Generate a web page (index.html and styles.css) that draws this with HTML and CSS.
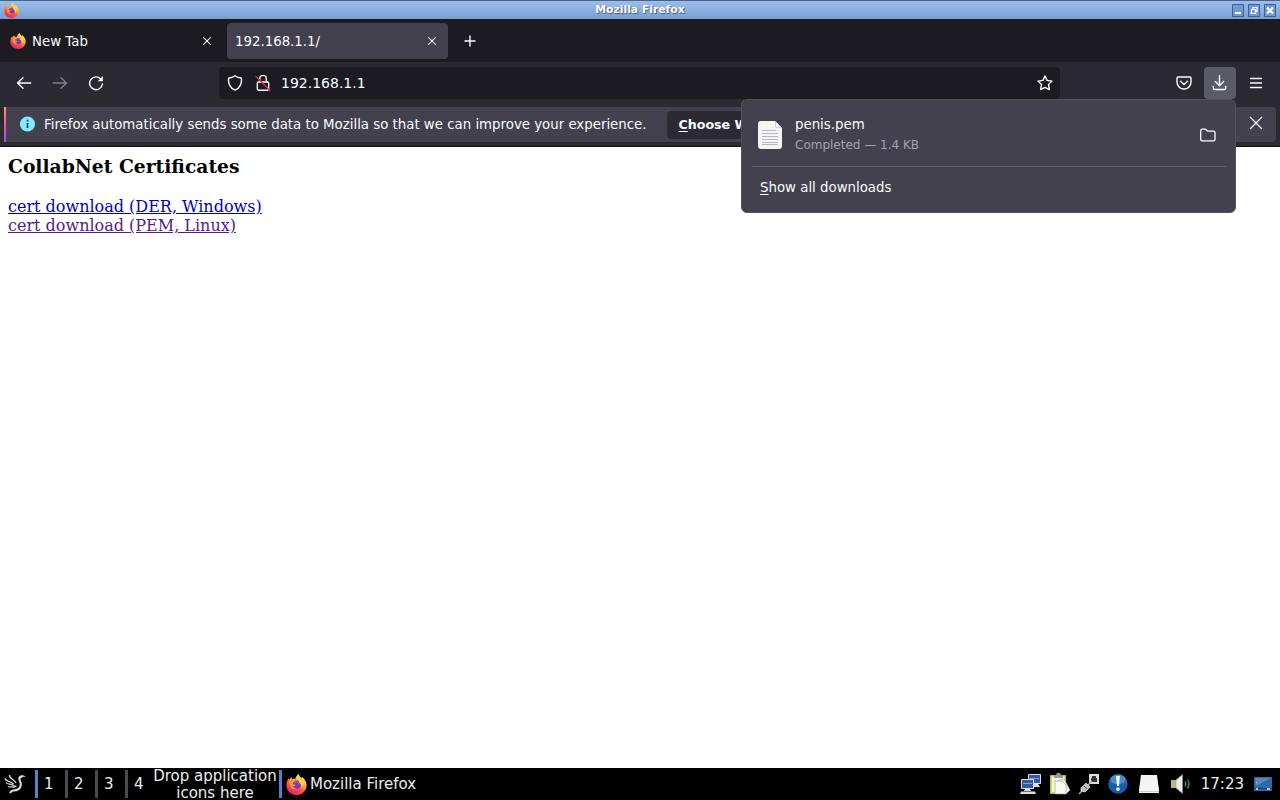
FILE: index.html
```html
<!DOCTYPE html>
<html lang="en">
<head>
  <meta charset="UTF-8" />
  <title>Mozilla Firefox</title>
  <link rel="stylesheet" href="styles.css">
</head>
<body>
  <!-- Shared icons -->
  <svg class="defs" width="0" height="0">
    <defs>
      <linearGradient id="flame" x1="0.8" y1="0" x2="0.25" y2="1">
        <stop offset="0.05" stop-color="#fff36b" />
        <stop offset="0.35" stop-color="#ffb52e" />
        <stop offset="0.62" stop-color="#ff5634" />
        <stop offset="1" stop-color="#e31587" />
      </linearGradient>
      <linearGradient id="globe" x1="0.3" y1="0" x2="0.6" y2="1">
        <stop offset="0" stop-color="#b23cc6" />
        <stop offset="1" stop-color="#5b3bc4" />
      </linearGradient>
    </defs>
    <symbol id="firefox" viewBox="0 0 16 16">
      <path fill="url(#flame)" d="M9.8 0c.2 1.6 1.2 2.3 2.2 3.3-.1-.5-.1-.8 0-1.2 1.9 1.3 3.7 3.7 3.7 6.4C15.7 12.8 12.3 16 8 16S.3 12.8.3 8.5c0-2 .7-3.9 1.9-5.2 0 .4.1.8.3 1.1.4-.9 1-1.6 1.7-2.1 0 .6.2 1.1.5 1.5.8-.2 1.6-.1 2.3.2C7.2 2.2 8.3.8 9.8 0z" />
      <circle cx="8.3" cy="8" r="3.2" fill="url(#globe)" />
      <path fill="#ff9b32" d="M2.5 4.700c1.500-.8 3.200-.7 4.500.1 0 .7-.6 1.200-1.500 1.400-.5.6-.7 1-.3 1.700.8-.2 1.600 0 2.200.6-.9.1-1.400.8-2.300.8.6 1.300 2 1.900 3.300 1.500-1.600 1.200-4.300.7-5.300-1.500-.6-1.500-.8-3-.6-4.600z" />
      <path fill="#ffd43d" d="M10.400 3.200c2.900 2 3.200 5.400 1.500 7.500.1-1.600-.5-3.200-1.700-4.100-1-.8-.9-2 .2-3.400z" />
    </symbol>
  </svg>

  <header class="titlebar">
    <svg class="title-icon" width="15" height="15"><use href="#firefox" /></svg>
    <span class="title">Mozilla Firefox</span>
    <div class="window-buttons">
      <svg width="12" height="13" viewBox="0 0 12 13"><path d="M.5.5h11v12H.5z" fill="#6f99d3" stroke="#3c5f94" /><path d="M3 9h6" stroke="#fff" stroke-width="2" /></svg>
      <svg width="12" height="13" viewBox="0 0 12 13"><path d="M.5.5h11v12H.5z" fill="#6f99d3" stroke="#3c5f94" /><path d="M5 6V3.500h4v4H7M3.500 5.500h4v4h-4z" fill="none" stroke="#fff" stroke-width="1.200" /></svg>
      <svg width="12" height="13" viewBox="0 0 12 13"><path d="M.5.5h11v12H.5z" fill="#6f99d3" stroke="#3c5f94" /><path d="M3 3.500l6 6m0-6l-6 6" stroke="#fff" stroke-width="2.200" /></svg>
    </div>
  </header>

  <nav class="tabs">
    <div class="tab">
      <svg width="16" height="16"><use href="#firefox" /></svg>
      <span class="tab-label">New Tab</span>
      <svg class="tab-close" width="8" height="8" viewBox="0 0 8 8"><path d="M.3.3l7.400 7.400m0-7.400L.3 7.700" /></svg>
    </div>
    <div class="tab active">
      <span class="tab-label">192.168.1.1/</span>
      <svg class="tab-close" width="8" height="8" viewBox="0 0 8 8"><path d="M.3.3l7.400 7.400m0-7.400L.3 7.700" /></svg>
    </div>
    <svg class="new-tab" width="12" height="12" viewBox="0 0 12 12"><path d="M6 .5v11M.5 6h11" /></svg>
  </nav>

  <div class="toolbar">
    <div class="nav-buttons">
      <svg width="16" height="16" viewBox="0 0 16 16"><path d="M14.700 8H1.700M7 2.700L1.500 8 7 13.300" /></svg>
      <svg class="disabled" width="16" height="16" viewBox="0 0 16 16"><path d="M1.300 8h13M9 2.700L14.500 8 9 13.300" /></svg>
      <svg width="16" height="16" viewBox="0 0 16 16"><path d="M12.800 4A6.400 6.400 0 1 0 14.400 9" /><path class="solid" d="M14.900 1v5.200H9.700z" /></svg>
    </div>
    <div class="urlbar">
      <svg width="16" height="16" viewBox="0 0 16 16"><path d="M8 .8c2 1.500 4.300 2.100 6.300 2.200.9 5.200-1.500 10.400-6.300 12.200C3.200 13.400.8 8.200 1.700 3 3.700 2.900 6 2.300 8 .8z" /></svg>
      <svg class="lock" width="16" height="16" viewBox="0 0 16 16"><path d="M4.700 7V3.700a3.300 3.300 0 0 1 6.600 0V7M3.500 7h9q1.200 0 1.200 1.200v5.600q0 1.400-1.200 1.400h-9q-1.200 0-1.200-1.400V8.200Q2.300 7 3.500 7z" /><path class="strike" d="M1 1.500L15 15.500" /></svg>
      <span class="url">192.168.1.1</span>
      <svg class="star" width="16" height="16" viewBox="0 0 16 16"><path d="M8 .9l2.100 4.500 4.900.7-3.500 3.500.8 5L8 12.300l-4.300 2.300.8-5L1 6.100l4.900-.7z" /></svg>
    </div>
    <div class="tools">
      <svg width="16" height="16" viewBox="0 0 16 16"><path d="M2.300 2h11.400q1.300 0 1.300 1.300V7A7 7 0 0 1 1 7V3.300Q1 2 2.300 2zM4.500 6.300L8 9.600l3.500-3.300" /></svg>
      <div class="tool-active">
        <svg width="16" height="16" viewBox="0 0 16 16"><path d="M7.500.5v10M3.400 6.600l4.100 4.100 4.100-4.100M1.300 11.500V13q0 1.500 1.500 1.500h9.400q1.500 0 1.500-1.500v-1.500" /></svg>
      </div>
      <svg width="16" height="16" viewBox="0 0 16 16"><path d="M2.500 3.500h11M2.500 8h11M2.500 12.500h11" /></svg>
    </div>
  </div>

  <div class="notice-wrap">
    <div class="notice">
      <svg class="info" width="16" height="16" viewBox="0 0 16 16"><circle cx="7.500" cy="8" r="7.600" /><path d="M7.500 7v5M7.500 3.800v1.700" /></svg>
      <span class="notice-text">Firefox automatically sends some data to Mozilla so that we can improve your experience.</span>
      <button class="choose"><u>C</u>hoose W</button>
      <svg class="notice-close" width="14" height="14" viewBox="0 0 14 14"><path d="M1 1l12 12M13 1L1 13" /></svg>
    </div>
  </div>

  <!-- Downloads panel -->
  <div class="downloads">
    <div class="download">
      <svg class="file" width="24" height="28" viewBox="0 0 24 28">
        <path fill="#f5f5f7" d="M3 0h14l7 7v18q0 3-3 3H3q-3 0-3-3V3q0-3 3-3z" />
        <path fill="#fff" stroke="#b9b9c2" stroke-width=".7" d="M17.500.500V5q0 1.500 1.500 1.500h4.500z" />
        <path stroke="#b6b6bc" d="M4 9.500h14M4 12.500h16M4 15.500h16M4 18.500h16M4 21.500h16M4 23.500h16" />
      </svg>
      <div class="download-info">
        <span class="download-name">penis.pem</span>
        <span class="download-status">Completed — 1.4 KB</span>
      </div>
      <svg class="folder" width="16" height="16" viewBox="0 0 16 16"><path d="M2.300 2.200h3.300l1.900 1.900h5.900q1.600 0 1.600 1.600v6.500q0 1.600-1.600 1.600H2.300Q.7 13.800.7 12.200V3.800q0-1.600 1.600-1.600z" /></svg>
    </div>
    <a class="show-all"><u>S</u>how all downloads</a>
  </div>

  <main class="page">
    <h3>CollabNet Certificates</h3>
    <a href="#" class="link">cert download (DER, Windows)</a>
    <a href="#" class="link seen">cert download (PEM, Linux)</a>
  </main>

  <footer class="taskbar">
    <svg class="bird" width="22" height="22" viewBox="0 0 22 22">
      <path fill="none" stroke="#ddd" stroke-width="2" d="M16 4.500c-2.500 1.500 1.500 4 .8 7.500-.6 4-4 5.500-7.500 5.500-1.500 0-2.500 1-3.300 2.500" />
      <path fill="#ddd" d="M14.500 5c.5-3 3.500-3.500 7.500-1.300-3-.3-4 .3-5 1.800z" />
      <path fill="none" stroke="#ddd" stroke-width="1.300" d="M5.500 2c-.5 3.500 4 4 6.500 8M1 5.500c1 3.500 5 2 8.500 5.500M2 9.500c1.500 2.500 4 1 6.500 2.500 1.500 1 2.500 1.500 4 1.500M4 13.500c2 1 4-.5 6.500 1" />
    </svg>
    <div class="desktops">
      <span class="desk current">1</span>
      <span class="desk">2</span>
      <span class="desk">3</span>
      <span class="desk">4</span>
    </div>
    <div class="drop">Drop application<br>icons here</div>
    <div class="task">
      <svg width="21" height="21"><use href="#firefox" /></svg>
      <span>Mozilla Firefox</span>
    </div>
    <div class="tray">
      <!-- network -->
      <svg width="22" height="22" viewBox="0 0 22 22">
        <path fill="#315b9b" stroke="#ddd" d="M8.500 1.500h12v9h-12z" /><path fill="#ddd" d="M12 11h6l2 3h-8z" />
        <path fill="#315b9b" stroke="#ddd" d="M1.500 6.500h12v9h-12z" /><path fill="#ddd" d="M5 16h5l1 2H4zM1 18.500h14l1 2.500H0z" />
        <path stroke="#7da4d8" d="M3 10.500h9M10 5.500h9" />
      </svg>
      <!-- clipboard -->
      <svg width="22" height="22" viewBox="0 0 22 22">
        <path fill="#d8dd58" stroke="#bbc23a" d="M1.500 2.500h15v18h-15z" /><path fill="#f5f5ec" d="M3 4h12v15H3z" /><path fill="#999" d="M5 2h2l1-2h3l1 2h2v3H5z" />
        <path fill="#eee" stroke="#aaa" stroke-width=".6" d="M8 8l7-2 6 11-4 4-7-1z" /><path fill="#f9f9f0" stroke="#999" stroke-width=".6" d="M6 8h7l4 4v9H6z" />
      </svg>
      <!-- network plug -->
      <svg width="22" height="22" viewBox="0 0 22 22">
        <path fill="#ddd" d="M11 1h10v10H11z" /><path fill="#333" d="M13 5h1V3h4v2h1v4h-6z" />
        <path fill="none" stroke="#aaa" stroke-width="1.500" d="M14 8l-5 5M5 17l-4 4" /><path fill="#bbb" stroke="#eee" stroke-width=".7" d="M8 10l4 4-5 5-4-1v-3z" /><path stroke="#555" d="M6 13l3 3" />
      </svg>
      <!-- update notifier -->
      <svg width="22" height="22" viewBox="0 0 22 22">
        <circle cx="11" cy="11" r="9.700" fill="#195eac" /><ellipse cx="11" cy="6.500" rx="7.500" ry="5" fill="#4b8bcd" />
        <path fill="#fff" d="M9.200 3h3.600l-.8 10h-2zM11 14.300a1.800 1.800 0 1 1 0 3.600 1.800 1.800 0 0 1 0-3.600z" />
      </svg>
      <!-- removable drive -->
      <svg class="drive" width="22" height="22" viewBox="0 0 22 22"><path fill="#f4f4f4" d="M3 2h16l2 15v3H1v-3z" /><path stroke="#ccc" d="M1 18.500h20" /></svg>
      <!-- volume -->
      <svg class="volume" width="22" height="22" viewBox="0 0 22 22">
        <path fill="#c9b284" d="M1 7h6v8H1z" /><path fill="#ecebe6" stroke="#999" stroke-width=".6" d="M6 7l6.500-5.500v19L6 15z" />
        <path fill="none" stroke="#41a83a" stroke-width="1.300" d="M15 8.500q1.700 2.500 0 5M17.500 6.500q3 4.500 0 9" />
      </svg>
      <span class="clock">17:23</span>
      <svg class="screen" width="18" height="14" viewBox="0 0 18 14"><path fill="#2f68a5" d="M0 0h18v14H0z" /><path fill="#5688b9" d="M1 1h16L2 9z" /><path stroke="#183d66" d="M0 11.500h18" /><path fill="#a9c6df" d="M2 11h2v2H2zM13 11h3v2h-3zM2 5h1v1H2z" /></svg>
    </div>
  </footer>
</body>
</html>
```

FILE: styles.css
```css
* {
  box-sizing: border-box;
}

body {
  margin: 0;
  width: 1280px;
  height: 800px;
  overflow: hidden;
  display: flex;
  flex-direction: column;
  background: #fff;
  color: #fbfbfe;
  font-family: "DejaVu Sans", sans-serif;
  font-size: 13.33px;
  position: relative;
}

svg {
  display: block;
  flex: none;
}

.defs {
  position: absolute;
}

/* Window title bar */
.titlebar {
  height: 19px;
  flex: none;
  display: grid;
  grid-template-columns: 1fr auto 1fr;
  align-items: center;
  padding: 1px 4px 0 4px;
  border-top: 1px solid #45658b;
  background: linear-gradient(#9dbde9, #8bafe0 50%, #799fcd);
}

.title {
  font-size: 10.8px;
  font-weight: bold;
  line-height: 15px;
  padding-bottom: 2px;
  text-shadow: 1px 1px 1px #42618c;
}

.window-buttons {
  display: flex;
  justify-content: flex-end;
  gap: 4px;
}

/* Tabs */
.tabs {
  height: 43px;
  flex: none;
  display: flex;
  align-items: center;
  padding: 0 6px 0 2px;
  background: #1c1b22;
}

.tab {
  width: 221px;
  height: 36px;
  display: flex;
  align-items: center;
  padding: 0 12px 0 8px;
  border-radius: 4px;
}

.tab + .tab {
  margin-left: 4px;
}

.tab .tab-label {
  flex: 1;
  padding-top: 2px;
}

.tab svg + .tab-label {
  margin-left: 6px;
}

.tab.active {
  background: #42414d;
}

.tab-close,
.new-tab {
  fill: none;
  stroke: #fbfbfe;
  stroke-width: 1.1;
}

.new-tab {
  margin-left: 16px;
  margin-top: 1px;
  stroke-width: 1.4;
}

/* Navigation toolbar */
.toolbar {
  height: 42px;
  flex: none;
  display: flex;
  align-items: center;
  background: #2b2a33;
}

.toolbar svg {
  fill: none;
  stroke: #fbfbfe;
  stroke-width: 1.4;
  stroke-linecap: round;
  stroke-linejoin: round;
}

.toolbar .disabled {
  opacity: 0.4;
}

.toolbar .solid {
  fill: #fbfbfe;
  stroke: none;
}

.toolbar .strike {
  stroke: #e22850;
}

.nav-buttons {
  width: 219px;
  display: flex;
  gap: 20px;
  padding-left: 16px;
}

.urlbar {
  width: 841px;
  height: 32px;
  display: flex;
  align-items: center;
  padding: 0 7px 0 8px;
  border-radius: 4px;
  background: #1c1b22;
}

.lock {
  margin-left: 12px;
}

.url {
  flex: 1;
  margin-left: 10px;
  font-size: 14px;
}

.tools {
  flex: 1;
  display: flex;
  align-items: center;
  justify-content: flex-end;
  gap: 12px;
  padding-right: 16px;
}

.tool-active {
  width: 32px;
  height: 32px;
  display: grid;
  place-items: center;
  border-radius: 4px;
  background: #5b5b66;
}

/* Data notice */
.notice-wrap {
  height: 43px;
  flex: none;
  padding: 3px 4px 4px;
  background: #2b2a33;
  border-bottom: 1px solid #0c0c0d;
}

.notice {
  height: 35px;
  display: flex;
  align-items: center;
  padding: 0 13px 0 14px;
  border-left: 2px solid;
  border-image: linear-gradient(#ff9a68, #f0568c 50%, #9059ff) 0 0 0 1;
  border-radius: 4px;
  background: #42414d;
}

.info {
  margin-bottom: 2px;
}

.info circle {
  fill: #80ebff;
}

.info path {
  stroke: #2b2a33;
  stroke-width: 1.6;
}

.notice-text {
  margin-left: 8px;
  white-space: nowrap;
}

.choose {
  width: 140px;
  height: 28px;
  margin-left: 20px;
  padding: 0 12px;
  border: 0;
  border-radius: 4px;
  background: #2b2a33;
  color: #fbfbfe;
  font: bold 12.6px "DejaVu Sans", sans-serif;
  text-align: left;
}

.notice-close {
  margin-left: auto;
  margin-bottom: 3px;
  stroke: #fbfbfe;
  stroke-width: 1.3;
}

u {
  text-underline-offset: 2px;
}

/* Downloads panel, opens over the page */
.downloads {
  position: absolute;
  left: 741px;
  top: 99px;
  width: 495px;
  height: 114px;
  padding: 0 8px 0 10px;
  border: 1px solid #52525e;
  border-radius: 6px;
  background: #42414d;
}

.download {
  height: 67px;
  display: flex;
  align-items: center;
  padding: 3px 11px 0 6px;
  border-bottom: 1px solid #5b5b66;
}

.download-info {
  flex: 1;
  display: flex;
  flex-direction: column;
  gap: 5px;
  margin-left: 13px;
  padding-bottom: 1px;
}

.download-name {
  line-height: 16px;
}

.download-status {
  font-size: 12px;
  line-height: 14px;
  color: #a3a2ad;
}

.folder {
  fill: none;
  stroke: #fbfbfe;
  stroke-width: 1.3;
}

.show-all {
  display: block;
  padding: 13px 0 0 8px;
  line-height: 16px;
}

/* Page content */
.page {
  flex: 1;
  padding: 8px;
  color: #000;
  font-family: "DejaVu Serif", serif;
  font-size: 16px;
}

.page h3 {
  margin: 0 0 19px;
  font-size: 18.72px;
  line-height: 23px;
}

.link {
  display: block;
  width: max-content;
  line-height: 19px;
  color: #0000c8;
}

.link.seen {
  color: #551a8b;
}

/* Desktop panel */
.taskbar {
  height: 32px;
  flex: none;
  display: flex;
  align-items: center;
  background: #000;
  color: #eee;
  font-size: 15px;
}

.bird {
  margin: 0 9px 0 4px;
}

.desktops {
  display: flex;
}

.desk {
  width: 30px;
  height: 28px;
  padding-left: 6px;
  border-left: 3px solid #4b4b4b;
  line-height: 28px;
}

.desk.current {
  border-color: #4a86cf;
}

.drop {
  width: 124px;
  margin-left: -2px;
  padding-top: 1px;
  text-align: center;
  line-height: 17px;
  white-space: nowrap;
}

.task {
  height: 28px;
  display: flex;
  align-items: center;
  gap: 3px;
  margin-left: 2px;
  padding-left: 4px;
  border-left: 3px solid #4a86cf;
}

.tray {
  display: flex;
  align-items: center;
  gap: 7px;
  margin-left: auto;
  padding-right: 8px;
}

.drive {
  margin-left: 2px;
}

.volume {
  margin-left: 3px;
}

.clock {
  margin-left: 2px;
}

.screen {
  margin-left: 3px;
}
```
